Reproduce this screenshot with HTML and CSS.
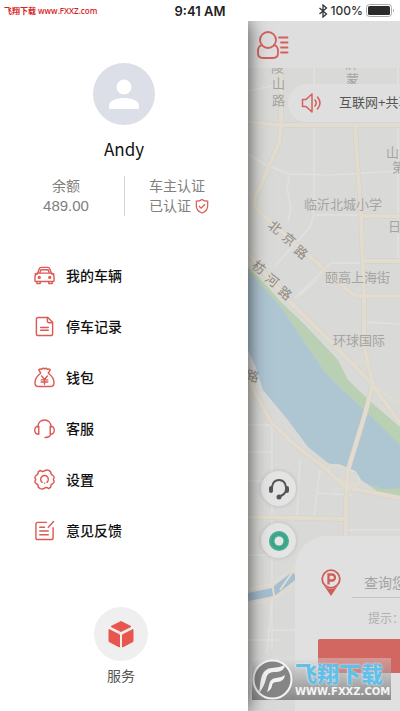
FILE: index.html
```html
<!DOCTYPE html>
<html lang="zh-CN">
<head>
    <title>停车</title>
    <meta charset="UTF-8">
    <meta name="viewport" content="width=device-width, initial-scale=1">
    <link rel="stylesheet" href="styles.css">
</head>
<body>
    <header class="status">
        <span class="site">飞翔下载 www.FXXZ.com</span>
        <span class="time">9:41 AM</span>
        <span class="power">
            <svg width="10" height="14" viewBox="0 0 10 14" fill="none" stroke="#333" stroke-width="1.3"><path d="M1.5 4l7 6L5 13V1l3.500 3-7 6"/></svg>
            <span>100%</span>
            <svg width="30" height="13" viewBox="0 0 30 13"><rect x=".5" y=".5" width="25" height="12" rx="3" fill="#fff" stroke="#aaa"/><rect x="2" y="2" width="22" height="9" rx="1.500" fill="#2b2b2b"/><path d="M27 4.500q2 2 0 4z" fill="#aaa"/></svg>
        </span>
    </header>
    <div class="screen">
        <aside class="drawer">
            <div class="profile">
                <svg class="avatar" viewBox="0 0 62 62"><circle cx="31" cy="31" r="31" fill="#dcdfe7"/><circle cx="31" cy="24" r="7.500" fill="#fff"/><path d="M16 46v-3.500C16 37 25 35 31 35s15 2 15 7.500V46z" fill="#fff"/></svg>
                <h1 class="name">Andy</h1>
            </div>
            <div class="stats">
                <div class="stat"><span>余额</span><span class="money">489.00</span></div>
                <div class="stat stat-auth">
                    <span>车主认证</span>
                    <span class="auth">已认证
                        <svg width="14" height="16" viewBox="0 0 16 18" fill="none" stroke="#dc5a54" stroke-width="1.4"><path d="M8 1.500c2 1.500 4 2 6.500 2V9c0 4-2.500 6.500-6.500 8-4-1.500-6.500-4-6.500-8V3.500C4 3.500 6 3 8 1.500z"/><path d="M4.500 9l2.500 2.500L11.500 7"/></svg>
                    </span>
                </div>
            </div>
            <nav class="menu">
                <a href="#"><svg class="icon" viewBox="0 0 22 22"><path d="M3.500 9.500L5.500 4q.5-1.500 2-1.500h7q1.500 0 2 1.500l2 5.500M6 8.500L7.200 5h7.600L16 8.500zM4 8.500h14q3 1 3 4v4q0 .7-.7.700H1.700q-.7 0-.7-.7v-4q0-3 3-4zM3 17.200v2.300h3.500v-2.300M15.500 17.200v2.300H19v-2.300M1 9.500l2-.8M21 9.500l-2-.8"/><circle cx="5.500" cy="13" r="1"/><circle cx="16.500" cy="13" r="1"/></svg>我的车辆</a>
                <a href="#"><svg class="icon" viewBox="0 0 22 22"><path d="M4.500 1.500h10l5 5v12q0 2-2 2h-13q-2 0-2-2v-15q0-2 2-2zM14 1.500V5q0 2 2 2h3.500M7 12h8M7 15h8"/></svg>停车记录</a>
                <a href="#"><svg class="icon" viewBox="0 0 22 22"><path d="M7 6.500L5 3q1.500-1.500 3-.5 1.500-2 3-.5 1.500-1.500 3 .5 1.500-1 3 .5l-2 3.500M7 6.500C3 9.500 1 13 1 16.500q0 4 4 4h12q4 0 4-4c0-3.500-2-7-6-10M8 9.500l3 3.500 3-3.500M11 13v5M7.500 13.500h7M7.500 15.700h7"/></svg>钱包</a>
                <a href="#"><svg class="icon" viewBox="0 0 22 22"><path d="M4 9.500C4 5 7 2 11 2s7 3 7 7.500M5 8.500v8.500q-4.200 0-4.200-4.200T5 8.500zM17 8.500v8.500q4.200 0 4.200-4.200T17 8.500zM17.500 17c-.5 2.500-2.500 3.500-6 3.500"/></svg>客服</a>
                <a href="#"><svg class="icon" viewBox="0 0 22 22"><path d="M6.500 1.500q2.500 2 4.500.5t4.500-.5l2 1.500q0 3 2 3.500 2 1.500 1.500 3-1.500 1.500 0 3 .5 1.500-1.500 3-2 .5-2 3.500l-2 1.500q-2.500-2-4.500-.5t-4.500.5l-2-1.500q0-3-2-3.500-2-1.500-1.500-3 1.500-1.500 0-3-.5-1.500 1.500-3 2-.5 2-3.500z"/><path d="M8.500 14a4 4 0 1 1 5 0M11 14.800h.1"/></svg>设置</a>
                <a href="#"><svg class="icon" viewBox="0 0 22 22"><path d="M13 2.500H4q-2 0-2 2v14q0 2 2 2h14q2 0 2-2V8M20.500 1.500l-5.500 6M6 7.500h5M6 11.500h9M6 15.500h9"/></svg>意见反馈</a>
            </nav>
            <a class="service" href="#">
                <span class="service-icon"><svg width="26" height="28" viewBox="0 0 26 28" fill="#e8574d" stroke="#e8574d" stroke-linejoin="round"><path d="M13 1.500l10 5L13 11.500 3 6.500zM1 9.500l10.500 5.300V27L1 21.500zM25 9.500l-10.500 5.300V27L25 21.500z"/></svg></span>
                服务
            </a>
        </aside>

        <main class="home">
            <svg class="map" viewBox="248 21 152 690" preserveAspectRatio="xMinYMin slice">
                <rect x="248" y="21" width="600" height="690" fill="#d9d9d7"/>
                <!-- side streets -->
                <g fill="none" stroke="#e1e1df" stroke-width="1.500">
                    <path d="M314 68v147l-4 12-36 40M248 91l30-6M248 154l18 11 24 9 40 1 70-4M290 174l-3 14 4 20-3 14M316 215h46M398 68v190M295 298l36-35h33M366 322l34 2M300 295l18-16M248 425h24M272 425v225M248 452h24M320 470l-6 46M318 493l34 2M300 460l-3 57M248 481h46M346 530h54M248 555h30M272 597l-5 56M267 630h28M248 640h30"/>
                </g>
                <!-- river -->
                <path d="M248 267L268 287 281 302 305 325 338 360 348 380 371 402 400 427V447L368 413 345 392 325 372 308 347 281 307 248 272z" fill="#bad0b2"/>
                <path d="M248 271L264 288 281 307 308 347 325 372 345 392 368 413 400 445V495L375 489 361 480 350 469 328 463 308 447 288 420 263 390 256 368 248 350z" fill="#aec5d2"/>
                <path d="M368 484l16 5 16-1v9l-22-5z" fill="#bad0b2"/>
                <path d="M248 597l25-5 22-17" fill="none" stroke="#a6bfd0" stroke-width="8"/>
                <!-- main roads -->
                <g fill="none" stroke-linejoin="round">
                    <g stroke="#d6d0c4" stroke-width="5">
                        <path d="M281 68v58l-2 17-24 55-1 9 96 85q4 4 10 4h40M248 122l30 3h122M355 126l6 90 3 80v50l9 38M361 216h39M364 261h36"/>
                        <path d="M248 253l37 44 46 45 40 41 29 40M373 384l-8 30-17 56-2 30v36M248 375l7 18 16 29 24 23 30 23 20 19 55 11M248 517l98 2"/>
                    </g>
                    <g stroke="#e1dccf" stroke-width="4">
                        <path d="M281 68v58l-2 17-24 55-1 9 96 85q4 4 10 4h40M248 122l30 3h122M355 126l6 90 3 80v50l9 38M361 216h39M364 261h36"/>
                        <path d="M248 253l37 44 46 45 40 41 29 40M373 384l-8 30-17 56-2 30v36M248 375l7 18 16 29 24 23 30 23 20 19 55 11M248 517l98 2"/>
                    </g>
                    <path d="M354 365q12-8 14 2l7 20 20 13 5 4M327 470q5-7 14-4l14 6 5 8-4 6-12-4-14-8M248 589l24-5 22-17M248 605l26-6 20-15M272 582l3 20M280 590l14-20M332 490l20-4" stroke="#e1dccf" stroke-width="2"/>
                </g>
                <g class="places">
                    <text x="271" y="72">陵</text><text x="272" y="88">山</text><text x="272" y="105">路</text>
                    <text x="345" y="68">沂</text><text x="346" y="84">蒙</text>
                    <text x="304" y="209">临沂北城小学</text>
                    <text x="325" y="282">颐高上海街</text>
                    <text x="333" y="345">环球国际</text>
                    <text x="386" y="157">山</text><text x="392" y="172">第</text>
                    <text x="388" y="231">日</text>
                    <g class="road-names">
                        <text transform="translate(267 227) rotate(38)">北</text>
                        <text transform="translate(281 239) rotate(38)">京</text>
                        <text transform="translate(293 252) rotate(38)">路</text>
                        <text transform="translate(251 267) rotate(38)">枋</text>
                        <text transform="translate(264 280) rotate(38)">河</text>
                        <text transform="translate(277 293) rotate(38)">路</text>
                        <text transform="translate(245 379) rotate(15)">路</text>
                    </g>
                </g>
            </svg>

            <div class="topbar">
                <button class="plain" aria-label="个人中心"><svg width="32" height="28" viewBox="0 0 32 28" fill="none" stroke="#d65f5a" stroke-width="1.800" stroke-linecap="round"><circle cx="11" cy="9" r="8"/><path d="M5 14q-4 1-4 6v2q0 5 5 5h10q5 0 5-5v-2q0-5-4-6M22 6.500h8.500M24 11.500h6.500M24 16.500h6.500M24 21.500h6.500"/></svg></button>
            </div>
            <div class="notice">
                <svg width="22" height="20" viewBox="0 0 22 20" fill="none" stroke="#d65f5a" stroke-width="1.500" stroke-linejoin="round" stroke-linecap="round"><path d="M1.500 6.500H5L11 1v18l-6-5.500H1.500zM14 7q2.500 3 0 6M16.500 4q5 6 0 12"/></svg>
                <span>互联网+共享停车</span>
            </div>

            <div class="tools">
                <button class="round" aria-label="联系客服"><svg width="22" height="22" viewBox="0 0 22 22" fill="none" stroke="#555" stroke-width="2"><path d="M4 12V9q1-7 7-7t7 7v3q-1 5-7 6.500"/><path d="M3 10v3M19 10v3" stroke-width="4" stroke-linecap="round"/><circle cx="11" cy="19" r="1.500" fill="#555"/></svg></button>
                <button class="round" aria-label="定位"><svg width="20" height="20" viewBox="0 0 20 20"><circle cx="10" cy="10" r="10" fill="#43ab8f"/><circle cx="10" cy="10" r="7" fill="none" stroke="#379b80"/><circle cx="10" cy="10" r="4.500" fill="#e6e6e6"/></svg></button>
            </div>

            <form class="search">
                <div class="field">
                    <label for="place" aria-label="停车场"><svg width="20" height="28" viewBox="0 0 20 28"><path d="M3 16.500Q7 20 10 20t7-3.500L10 27z" fill="#cf5e59"/><circle cx="10" cy="10" r="8.800" fill="#e2e2e2" stroke="#cf5e59" stroke-width="1.800"/><path d="M7.500 15.500V5.500H11a3 3 0 0 1 0 6H7.500" fill="none" stroke="#cf5e59" stroke-width="2.300"/></svg></label>
                    <input id="place" type="text" placeholder="查询您的停车位置">
                </div>
                <p class="hint">提示：请输入停车场</p>
                <button class="go" type="button" aria-label="查询"></button>
            </form>

            <div class="badge">
                <svg width="41" height="41" viewBox="0 0 41 41"><circle cx="20.500" cy="20.500" r="19" fill="#858585" stroke="#f4f4f4" stroke-width="2"/><path d="M7 34C9 22 8 10 20 9q7 0 13-3-1 7-9 7-9-1-10 7-2 8-7 14zM15 33c3-7 1-13 9-14q5 0 9-3-1 7-8 7-5 0-5 4-1 4-5 6z" fill="#f2f2f2"/></svg>
                <div class="badge-text"><strong>飞翔下载</strong><span>WWW.FXXZ.COM</span></div>
            </div>
        </main>
    </div>
</body>
</html>
```
FILE: styles.css
```css
* {
    box-sizing: border-box;
}
body {
    margin: 0;
    min-height: 100vh;
    display: flex;
    flex-direction: column;
    background: #fff;
    color: #111;
    font-family: "Liberation Sans", "Noto Sans CJK SC", sans-serif;
    font-size: 14px;
    line-height: 20px;
}
a {
    color: inherit;
    text-decoration: none;
}
svg {
    display: block;
    flex-shrink: 0;
}
button {
    border: 0;
    padding: 0;
    background: none;
}

.status {
    position: relative;
    z-index: 3;
    display: grid;
    grid-template-columns: 1fr auto 1fr;
    align-items: center;
    height: 21px;
    padding: 0 4px;
    background: #fff;
}
.site {
    color: #d8231f;
    font: 600 8px/20px "Open Sans", "Noto Sans CJK SC", sans-serif;
}
.time {
    font: 600 13px/20px Inter, sans-serif;
    color: #222;
}
.power {
    display: flex;
    justify-content: flex-end;
    align-items: center;
    gap: 3px;
    font: 500 12px/20px Inter, sans-serif;
    color: #333;
}

.screen {
    flex: 1;
    display: flex;
}

/* drawer */
.drawer {
    position: relative;
    z-index: 2;
    width: 62%;
    display: flex;
    flex-direction: column;
    padding-top: 42px;
    background: #fff;
    box-shadow: 0 0 18px rgba(0, 0, 0, 0.7);
}
.profile {
    display: flex;
    flex-direction: column;
    align-items: center;
    gap: 12px;
}
.avatar {
    width: 62px;
    height: 62px;
}
.name {
    margin: 0;
    font: 400 17px/24px "Noto Sans CJK SC", sans-serif;
}
.stats {
    display: grid;
    grid-template-columns: 1fr 1fr;
    margin-top: 15px;
    color: #808080;
}
.stat {
    display: flex;
    flex-direction: column;
    align-items: center;
    padding-left: 8px;
}
.stat-auth {
    align-items: flex-start;
    padding-left: 24px;
    border-left: 1px solid #d4d4d4;
}
.money {
    font-size: 15px;
}
.auth {
    display: flex;
    align-items: center;
    gap: 4px;
}
.menu {
    display: flex;
    flex-direction: column;
    margin-top: 34px;
    padding-left: 34px;
}
.menu a {
    display: flex;
    align-items: center;
    gap: 11px;
    height: 51px;
    font-weight: 500;
}
.icon {
    width: 21px;
    height: 21px;
    fill: none;
    stroke: #dc5a54;
    stroke-width: 1.5;
    stroke-linecap: round;
    stroke-linejoin: round;
}
.service {
    display: flex;
    flex-direction: column;
    align-items: center;
    gap: 5px;
    margin: auto 6px 25px 0;
    color: #555;
}
.service-icon {
    display: flex;
    align-items: center;
    justify-content: center;
    width: 54px;
    height: 54px;
    border-radius: 50%;
    background: #efefef;
}

/* home */
.home {
    position: relative;
    flex: 1;
    min-width: 0;
    overflow: hidden;
    display: flex;
    flex-direction: column;
}
.map {
    position: absolute;
    inset: 0;
    width: 100%;
    height: 100%;
}
.places {
    fill: #a5a4a2;
    font-size: 13px;
}
.road-names {
    fill: #8f8a83;
}
.topbar {
    position: relative;
    display: flex;
    align-items: center;
    height: 47px;
    padding-left: 9px;
    background: #dedede;
}
.notice {
    position: relative;
    display: flex;
    align-items: center;
    gap: 16px;
    height: 38px;
    margin: 16px 0 0 40px;
    padding-left: 13px;
    border-radius: 19px 0 0 19px;
    background: #dfdfdf;
    color: #555;
    font-size: 13px;
    white-space: nowrap;
}
.tools {
    position: absolute;
    left: 13px;
    bottom: 153px;
    display: flex;
    flex-direction: column;
    gap: 17px;
}
.round {
    display: flex;
    align-items: center;
    justify-content: center;
    width: 35px;
    height: 35px;
    border-radius: 50%;
    background: #e4e4e4;
    box-shadow: 0 0 4px rgba(0, 0, 0, 0.15);
}
.search {
    position: relative;
    margin: auto 0 0 47px;
    padding: 32px 0 38px 23px;
    border-radius: 32px 0 0 0;
    background: #e0e0e0;
    white-space: nowrap;
}
.field {
    display: flex;
    align-items: center;
    gap: 11px;
    padding-left: 3px;
}
.field input {
    flex: 1;
    min-width: 0;
    height: 30px;
    padding: 0 0 0 12px;
    border: 0;
    border-bottom: 1px solid #c4c4c4;
    border-radius: 0;
    background: none;
    font: 14px "Liberation Sans", "Noto Sans CJK SC", sans-serif;
}
.field input::placeholder {
    color: #a3a3a3;
}
.hint {
    margin: 11px 0 10px 50px;
    color: #b0b0b0;
    font-size: 12px;
}
.go {
    display: block;
    width: 100%;
    height: 34px;
    border-radius: 2px 0 0 2px;
    background: #d26661;
}
.badge {
    position: absolute;
    left: 4px;
    bottom: 11px;
    display: flex;
    align-items: center;
    gap: 2px;
    width: 139px;
    height: 42px;
    background: linear-gradient(rgba(225, 225, 225, 0.4), rgba(115, 115, 115, 0.8));
}
.badge-text {
    display: flex;
    flex-direction: column;
    gap: 2px;
    color: #f4f4f4;
    font: bold 10px/12px "DejaVu Sans", sans-serif;
}
.badge strong {
    color: #62bfe8;
    font: 900 22px/24px "Noto Sans CJK SC", sans-serif;
    text-shadow: 0 0 2px #fff;
}
```
